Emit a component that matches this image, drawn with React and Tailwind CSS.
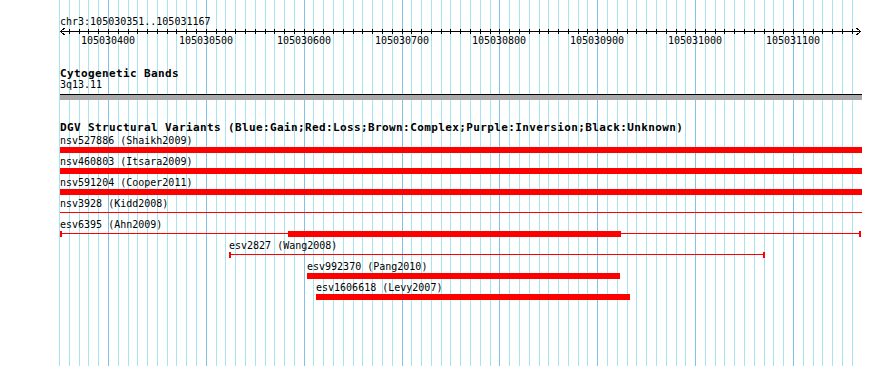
import React from 'react';

const BP0 = 105030400;
const px = (bp) => Math.round(108 + (bp - BP0) * 0.97857);

const gridLines = [];
for (let bp = 105030350; bp <= 105031160; bp += 10) {
  gridLines.push({ x: px(bp), major: bp % 100 === 0 });
}
const majors = gridLines.filter((g) => g.major);

const features = [
  { name: 'nsv527886 (Shaikh2009)', start: 60, thick: [[60, 862]] },
  { name: 'nsv460803 (Itsara2009)', start: 60, thick: [[60, 862]] },
  { name: 'nsv591204 (Cooper2011)', start: 60, thick: [[60, 862]] },
  { name: 'nsv3928 (Kidd2008)', start: 60, line: [60, 862] },
  { name: 'esv6395 (Ahn2009)', start: 60, line: [60, 861], caps: true, thick: [[288, 621]] },
  { name: 'esv2827 (Wang2008)', start: 229, line: [229, 765], caps: true },
  { name: 'esv992370 (Pang2010)', start: 307, thick: [[307, 620]] },
  { name: 'esv1606618 (Levy2007)', start: 316, thick: [[316, 630]] },
];

function Grid() {
  return (
    <svg className="absolute inset-0" width="890" height="366" shapeRendering="crispEdges">
      {gridLines.map((g) => (
        <line
          key={g.x}
          x1={g.x + 0.5}
          x2={g.x + 0.5}
          y1="0"
          y2="366"
          stroke={g.major ? '#80c2e8' : '#a6e4ef'}
          strokeWidth="1"
        />
      ))}
    </svg>
  );
}

function Ruler() {
  return (
    <svg className="block" width="890" height="21" shapeRendering="crispEdges">
      <line x1="60" x2="861" y1="4.5" y2="4.5" stroke="#000" />
      {gridLines
        .filter((g) => g.x > 61 && g.x < 858)
        .map((g) => (
          <line key={g.x} x1={g.x + 0.5} x2={g.x + 0.5} y1="2" y2="7" stroke="#000" />
        ))}
      <polyline points="64.5,1 60.5,4.5 64.5,8" fill="none" stroke="#000" />
      <polyline points="856.5,1 860.5,4.5 856.5,8" fill="none" stroke="#000" />
      {majors.map((g, i) => (
        <text
          key={g.x}
          x={g.x}
          y="17"
          textAnchor="middle"
          fontFamily="'DejaVu Sans Mono', monospace"
          fontSize="10"
          fill="#000"
        >
          {105030400 + i * 100}
        </text>
      ))}
    </svg>
  );
}

function Track({ f }) {
  return (
    <div className="mb-[4px]">
      <div className="h-[10px] leading-[10px] text-[10px] whitespace-pre" style={{ paddingLeft: f.start }}>
        {f.name}
      </div>
      <div className="relative mt-[1px] h-[6px]">
        {f.line && (
          <div
            className="absolute top-[2px] h-px bg-[#ff0000]"
            style={{ left: f.line[0], width: f.line[1] - f.line[0] }}
          />
        )}
        {f.caps && (
          <>
            <div className="absolute top-0 h-[6px] w-[2px] bg-[#ff0000]" style={{ left: f.line[0] }} />
            <div className="absolute top-0 h-[6px] w-[2px] bg-[#ff0000]" style={{ left: f.line[1] - 2 }} />
          </>
        )}
        {f.thick &&
          f.thick.map(([a, b]) => (
            <div key={a} className="absolute top-0 h-[6px] bg-[#ff0000]" style={{ left: a, width: b - a }} />
          ))}
      </div>
    </div>
  );
}

export default function App() {
  return (
    <div className="relative w-[890px] h-[366px] overflow-hidden bg-white text-black font-['DejaVu_Sans_Mono',monospace]">
      <Grid />
      <div className="relative flex flex-col">
        <div className="ml-[60px] mt-[17px] h-[10px] leading-[10px] text-[10px]">chr3:105030351..105031167</div>
        <Ruler />
        <div className="ml-[60px] mt-[20px] h-[11px] leading-[11px] text-[11px] font-bold tracking-[0.38px]">
          Cytogenetic Bands
        </div>
        <div className="ml-[60px] mt-[1px] h-[10px] leading-[10px] text-[10px]">3q13.11</div>
        <div className="ml-[60px] mt-[4px] w-[802px] h-px bg-black" />
        <div className="ml-[60px] w-[802px] h-[5px] bg-[#a9a9a9]" />
        <div className="ml-[60px] mt-[22px] h-[11px] leading-[11px] text-[11px] font-bold tracking-[0.38px] whitespace-pre">
          DGV Structural Variants (Blue:Gain;Red:Loss;Brown:Complex;Purple:Inversion;Black:Unknown)
        </div>
        <div className="mt-[3px]">
          {features.map((f) => (
            <Track key={f.name} f={f} />
          ))}
        </div>
      </div>
    </div>
  );
}
